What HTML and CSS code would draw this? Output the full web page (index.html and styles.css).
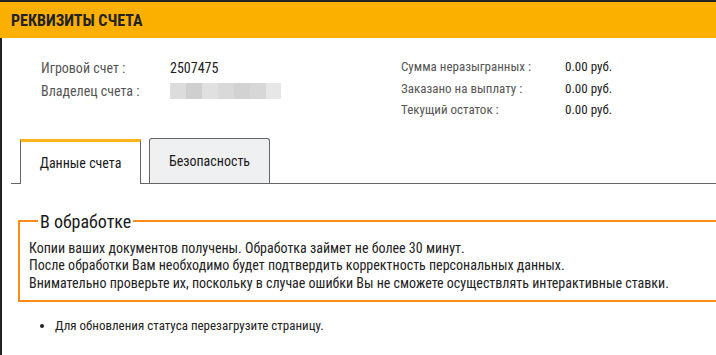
FILE: index.html
```html
<!DOCTYPE html>
<html lang="ru">
<head>
<meta charset="UTF-8">
<title>Реквизиты счета</title>
<link rel="stylesheet" href="styles.css">
</head>
<body>
<div class="page">
<div class="header">
<h1>РЕКВИЗИТЫ СЧЕТА</h1>
</div>
<div class="content">
<div class="info">
<div class="info-col left">
<div class="row"><span class="label">Игровой счет :</span><span class="value">2507475</span></div>
<div class="row"><span class="label">Владелец счета :</span><span class="value blur"><i></i><i></i><i></i><i></i><i></i><i></i><i></i></span></div>
</div>
<div class="info-col right">
<div class="row"><span class="label">Сумма неразыгранных :</span><span class="value">0.00 руб.</span></div>
<div class="row"><span class="label">Заказано на выплату :</span><span class="value">0.00 руб.</span></div>
<div class="row"><span class="label">Текущий остаток :</span><span class="value">0.00 руб.</span></div>
</div>
</div>
<div class="tabs">
<div class="tab active">Данные счета</div>
<div class="tab">Безопасность</div>
</div>
<fieldset class="status">
<legend>В обработке</legend>
<p>Копии ваших документов получены. Обработка займет не более 30 минут.<br>
После обработки Вам необходимо будет подтвердить корректность персональных данных.<br>
Внимательно проверьте их, поскольку в случае ошибки Вы не сможете осуществлять интерактивные ставки.</p>
</fieldset>
<ul class="notes">
<li>Для обновления статуса перезагрузите страницу.</li>
</ul>
</div>
</div>
</body>
</html>
```

FILE: styles.css
```css
html, body {
    margin: 0;
    padding: 0;
    overflow: hidden;
    background: #fff;
}
body {
    font-family: "Roboto Condensed", Roboto, "Liberation Sans", sans-serif;
    color: #222;
}
.page {
    border-top: 2px solid #222;
    height: 353px;
}
.header {
    background-color: #fbb000;
    height: 36px;
    display: flex;
    align-items: center;
    padding-left: 11px;
}
h1 {
    margin: 0;
    font-size: 16px;
    font-weight: 700;
    color: #222;
}
.content {
    border-left: 2px solid #222;
    height: 317px;
}
.info {
    display: flex;
    padding: 18px 0 0 39px;
    font-size: 13px;
}
.info-col.left {
    width: 360px;
    font-size: 14px;
}
.row {
    display: flex;
    align-items: center;
    height: 21.5px;
}
.left .row {
    height: 23px;
}
.label {
    color: #555;
}
.left .label {
    width: 129px;
}
.right .label {
    width: 164px;
}
.blur {
    display: flex;
    height: 16px;
}
.blur i {
    width: 16px;
    height: 16px;
    background: #dcdcdc;
}
.blur i:nth-child(2) { background: #cfcfcf; }
.blur i:nth-child(3) { background: #e0e0e0; }
.blur i:nth-child(4) { background: #d9d9d9; }
.blur i:nth-child(5) { background: #d3d1d3; }
.blur i:nth-child(6) { background: #d8d7d8; }
.blur i:nth-child(7) { background: #e7e7e7; width: 15px; }
.tabs {
    display: flex;
    align-items: flex-end;
    gap: 8px;
    margin: 17px 0 0 9px;
    padding-left: 9px;
    border-bottom: 1px solid #666;
    height: 45px;
}
.tab {
    box-sizing: border-box;
    width: 121px;
    height: 45px;
    border: 1px solid #666;
    border-bottom: none;
    border-radius: 3px 3px 0 0;
    background: #eff0f2;
    font-size: 14px;
    display: flex;
    align-items: center;
    justify-content: center;
    color: #1a1a1a;
}
.tab.active {
    background: #fff;
    border-top: 3px solid #fbb41c;
    border-radius: 0;
    margin-bottom: -1px;
    height: 45px;
    padding-top: 1px;
}
.status {
    box-sizing: border-box;
    margin: 27px 0 0 16px;
    width: calc(100% - 16px);
    border: 2px solid #ff8c1a;
    border-right: none;
    padding: 0 9px 8px 9px;
}
.status legend {
    font-size: 18px;
    margin-left: 9px;
    padding: 0 2px;
    color: #1a1a1a;
}
.status p {
    margin: 8px 0 0;
    font-size: 14px;
    line-height: 17.5px;
}
.notes {
    margin: 16px 0 0;
    padding-left: 53px;
    font-size: 13px;
}
```
